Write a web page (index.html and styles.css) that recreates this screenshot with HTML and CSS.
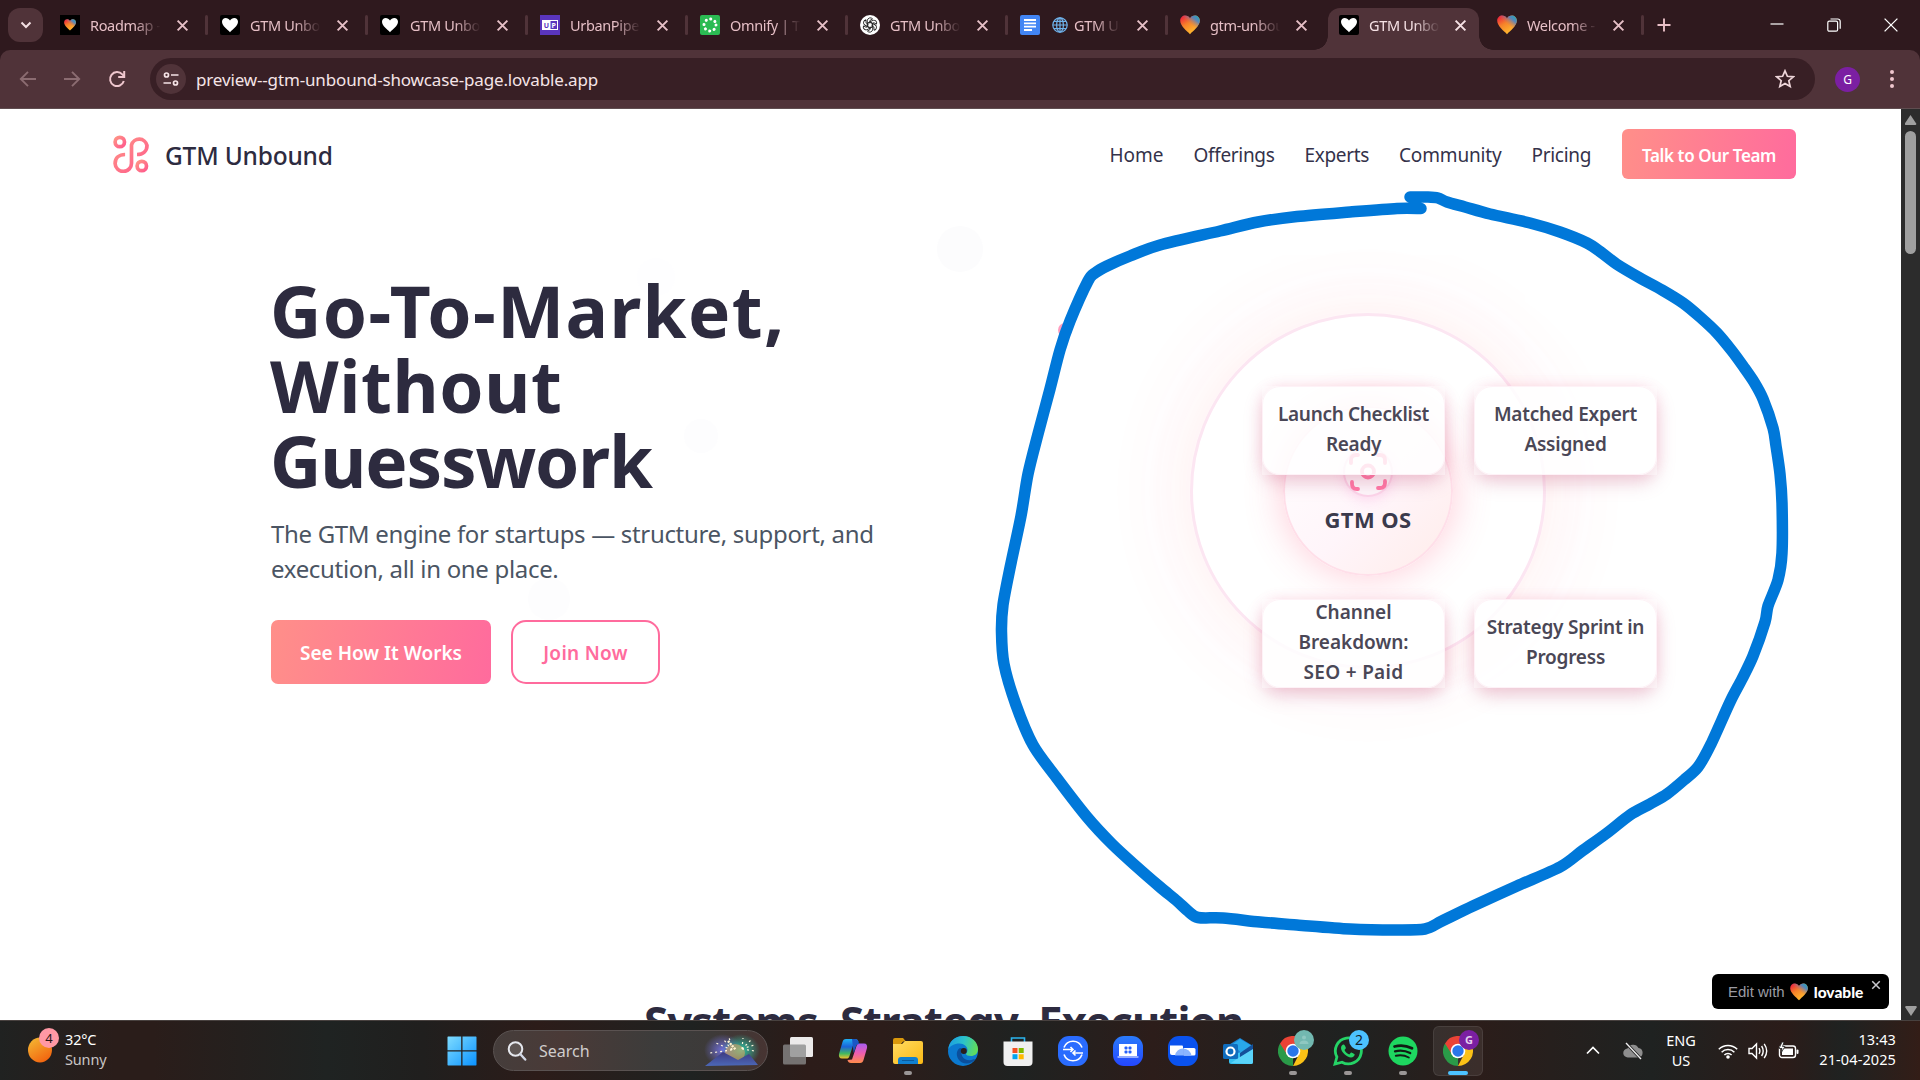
FILE: index.html
```html
<!DOCTYPE html>
<html lang="en">
<head>
<meta charset="utf-8">
<title>GTM Unbound</title>
<link rel="stylesheet" href="styles.css">
</head>
<body>
<svg class="defs" width="0" height="0" aria-hidden="true">
  <defs>
    <linearGradient id="gHeart" x1="0.1" y1="0.1" x2="0.6" y2="0.9"><stop offset="0" stop-color="#ee2b3c"/><stop offset="0.45" stop-color="#f5822a"/><stop offset="1" stop-color="#ffb52e"/></linearGradient>
    <linearGradient id="gHeartBlue" x1="0.95" y1="0.05" x2="0.55" y2="0.5"><stop offset="0" stop-color="#22a7b8"/><stop offset="0.4" stop-color="#4a86c8" stop-opacity="0.9"/><stop offset="1" stop-color="#c07a70" stop-opacity="0"/></linearGradient>
    <linearGradient id="gPink" x1="0" y1="0" x2="1" y2="1"><stop offset="0" stop-color="#ff9486"/><stop offset="1" stop-color="#ff5a8c"/></linearGradient>
    <linearGradient id="gSun" x1="0" y1="0" x2="0.6" y2="1"><stop offset="0" stop-color="#f4bd35"/><stop offset="1" stop-color="#f26610"/></linearGradient>
    <linearGradient id="gWin" x1="0" y1="0" x2="1" y2="1"><stop offset="0" stop-color="#7fdcff"/><stop offset="1" stop-color="#0a92ff"/></linearGradient>
    <linearGradient id="gEdge" x1="0" y1="0.3" x2="1" y2="0.5"><stop offset="0" stop-color="#1b9de2"/><stop offset="0.5" stop-color="#2cc3c9"/><stop offset="1" stop-color="#63dd57"/></linearGradient>
    <linearGradient id="gFolder" x1="0" y1="0" x2="1" y2="1"><stop offset="0" stop-color="#ffdb62"/><stop offset="1" stop-color="#fbb914"/></linearGradient>
    <linearGradient id="gBlue" x1="0" y1="0" x2="0" y2="1"><stop offset="0" stop-color="#2a7bfb"/><stop offset="1" stop-color="#2447ff"/></linearGradient>
    <linearGradient id="gCopA" x1="0" y1="0" x2="0" y2="1"><stop offset="0" stop-color="#1fb2f5"/><stop offset="0.4" stop-color="#1a63d8"/><stop offset="0.75" stop-color="#43b95f"/><stop offset="1" stop-color="#f2c12c"/></linearGradient>
    <linearGradient id="gCopB" x1="0" y1="0" x2="0" y2="1"><stop offset="0" stop-color="#a75cf0"/><stop offset="0.5" stop-color="#ee5db0"/><stop offset="1" stop-color="#ff8c4a"/></linearGradient>
    <radialGradient id="gGlowL"><stop offset="0" stop-color="#6f6fd8"/><stop offset="1" stop-color="#6f6fd8" stop-opacity="0"/></radialGradient>
    <radialGradient id="gGlowR"><stop offset="0" stop-color="#2fc5a8"/><stop offset="1" stop-color="#2fc5a8" stop-opacity="0"/></radialGradient>
    <linearGradient id="gHill" x1="0" y1="0" x2="0" y2="1"><stop offset="0" stop-color="#3d3a80"/><stop offset="1" stop-color="#4c68b8"/></linearGradient>
  </defs>
  <symbol id="heart" viewBox="0 0 20 20"><path d="M10 19.200C7 16 .2 11 .2 5.800.2 2.600 2.600.6 5.200.6c2 0 3.800 1 4.800 2.800C11 1.600 12.800.6 14.800.6c2.600 0 5 2 5 5.200C19.800 11 13 16 10 19.200z" fill="url(#gHeart)"/><path d="M10 19.200C7 16 .2 11 .2 5.800.2 2.600 2.600.6 5.200.6c2 0 3.800 1 4.800 2.800C11 1.600 12.800.6 14.800.6c2.600 0 5 2 5 5.200C19.800 11 13 16 10 19.200z" fill="url(#gHeartBlue)"/></symbol>
  <symbol id="whiteheart" viewBox="0 0 20 20"><rect width="20" height="20" rx="2" fill="#000"/><path d="M10 17.200C7.500 14.500 2 11 2 6.800 2 4.500 3.700 3 5.700 3 7.500 3 9 4 10 5.500 11 4 12.500 3 14.300 3 16.300 3 18 4.500 18 6.800 18 11 12.500 14.500 10 17.200z" fill="#fff"/></symbol>
  <symbol id="x" viewBox="0 0 12 12"><path d="M1.500 1.500l9 9m0-9l-9 9" stroke="currentColor" stroke-width="1.800" fill="none"/></symbol>
  <symbol id="chrome" viewBox="0 0 30 30"><path d="M15 15V30A15 15 0 0 1 2 7.500z" fill="#2a9a48"/><path d="M15 8.200H28.400A15 15 0 0 0 2 7.500L9 18.400z" fill="#ea4335"/><path d="M20.900 18.400L15 30A15 15 0 0 0 28.400 8.200H15z" fill="#fbc116"/><circle cx="15" cy="15" r="7.300" fill="#fff"/><circle cx="15" cy="15" r="5.700" fill="#2a76ea"/></symbol>
</svg>

<div class="screen">
  <header class="tabstrip">
    <button class="tabsearch" aria-label="Search tabs"><svg width="12" height="8" viewBox="0 0 12 8"><path d="M1.500 1.500L6 6l4.500-4.500" stroke="#f3dfe2" stroke-width="2" fill="none"/></svg></button>
    <div class="tab"><svg class="fav" viewBox="0 0 20 20"><rect width="20" height="20" fill="#000"/><use href="#heart" x="4" y="4" width="12" height="12"/></svg><span class="t">Roadmap - Lov</span><svg class="cl"><use href="#x"/></svg></div>
    <div class="tab"><svg class="fav"><use href="#whiteheart"/></svg><span class="t">GTM Unbound</span><svg class="cl"><use href="#x"/></svg></div>
    <div class="tab"><svg class="fav"><use href="#whiteheart"/></svg><span class="t">GTM Unbound</span><svg class="cl"><use href="#x"/></svg></div>
    <div class="tab"><svg class="fav" viewBox="0 0 20 20"><rect width="20" height="20" fill="#5a35bd"/><rect x="2" y="5" width="16" height="10" fill="#fff"/><rect x="10.500" y="6" width="6.500" height="8" fill="#5a35bd"/><text x="3.800" y="12.700" font-size="7" font-weight="700" fill="#5a35bd">U</text><text x="11.600" y="12.700" font-size="7" font-weight="700" fill="#fff">P</text></svg><span class="t">UrbanPiper</span><svg class="cl"><use href="#x"/></svg></div>
    <div class="tab"><svg class="fav" viewBox="0 0 20 20"><rect width="20" height="20" rx="2" fill="#2bbb53"/><circle cx="10" cy="10" r="6" fill="none" stroke="#fff" stroke-width="3" stroke-linecap="round" stroke-dasharray="0.100 4.612"/></svg><span class="t">Omnify | The</span><svg class="cl"><use href="#x"/></svg></div>
    <div class="tab"><svg class="fav" viewBox="0 0 20 20"><circle cx="10" cy="10" r="10" fill="#fff"/><g fill="none" stroke="#222" stroke-width=".9"><g id="petal"><path d="M7.300 8.500V5.800a3 3 0 0 1 5.300-1.900M7.300 8.500v3l2.700 1.600M12.600 3.900L9.900 5.500v3"/></g><use href="#petal" transform="rotate(60 10 10)"/><use href="#petal" transform="rotate(120 10 10)"/><use href="#petal" transform="rotate(180 10 10)"/><use href="#petal" transform="rotate(240 10 10)"/><use href="#petal" transform="rotate(300 10 10)"/></g></svg><span class="t">GTM Unbound</span><svg class="cl"><use href="#x"/></svg></div>
    <div class="tab"><svg class="fav" viewBox="0 0 20 20"><rect width="20" height="20" rx="2" fill="#4285f4"/><path d="M4 5h12M4 8.300h12M4 11.600h12M4 15h8" stroke="#fff" stroke-width="1.800"/></svg><span class="t"><svg class="globe" viewBox="0 0 16 16"><g fill="none" stroke="#6fb3ec" stroke-width="1.200"><circle cx="8" cy="8" r="7.200"/><ellipse cx="8" cy="8" rx="3.400" ry="7.200"/><path d="M8 .8v14.400M.8 8h14.400M2 4.300h12M2 11.700h12"/></g></svg>GTM Unb</span><svg class="cl"><use href="#x"/></svg></div>
    <div class="tab nosep"><svg class="fav"><use href="#heart"/></svg><span class="t">gtm-unbound</span><svg class="cl"><use href="#x"/></svg></div>
    <div class="tab active"><svg class="fav"><use href="#whiteheart"/></svg><span class="t">GTM Unbound</span><svg class="cl"><use href="#x"/></svg></div>
    <div class="tab last"><svg class="fav"><use href="#heart"/></svg><span class="t">Welcome - L</span><svg class="cl"><use href="#x"/></svg></div>
    <svg class="plus" width="14" height="14" viewBox="0 0 14 14"><path d="M7 .5v13M.5 7h13" stroke="#e9bfc7" stroke-width="1.900"/></svg>
    <div class="wincontrols">
      <svg width="14" height="14" viewBox="0 0 14 14"><path d="M.5 6h13" stroke="#fff" stroke-width="1.200"/></svg>
      <svg width="14" height="14" viewBox="0 0 14 14"><g fill="none" stroke="#fff" stroke-width="1.200"><rect x=".8" y="3.200" width="9.800" height="10" rx="1.500"/><path d="M3.500 1h7.300a2.400 2.400 0 0 1 2.400 2.400v7.400"/></g></svg>
      <svg width="14" height="14" viewBox="0 0 14 14"><path d="M.6.6l12.800 12.800m0-12.800L.6 13.400" stroke="#fff" stroke-width="1.300"/></svg>
    </div>
  </header>

  <div class="toolbar">
    <svg width="18" height="18" viewBox="0 0 18 18"><path d="M17 9H2M9 1.800L1.800 9 9 16.200" fill="none" stroke="#8b6c71" stroke-width="1.900"/></svg>
    <svg class="fwd" width="18" height="18" viewBox="0 0 18 18"><path d="M1 9h15M9 1.800L16.200 9 9 16.200" fill="none" stroke="#8b6c71" stroke-width="1.900"/></svg>
    <svg class="rel" width="18" height="18" viewBox="0 0 18 18"><path d="M15.800 11A7 7 0 1 1 14.300 4.400L16 6" fill="none" stroke="#efc7ce" stroke-width="2"/><path d="M16.200 1v6h-6" fill="none" stroke="#efc7ce" stroke-width="2"/></svg>
    <div class="omnibox">
      <span class="site"><svg width="16" height="16" viewBox="0 0 16 16"><g fill="none" stroke="#f5e3e6" stroke-width="1.700"><circle cx="3.500" cy="4" r="2"/><path d="M8 4h7.500M.5 12H8"/><circle cx="12.500" cy="12" r="2"/></g></svg></span>
      <span class="url">preview--gtm-unbound-showcase-page.lovable.app</span>
      <svg class="star" width="20" height="20" viewBox="0 0 20 20"><path d="M10 1.800l2.400 5.500 5.900.5-4.500 3.900 1.400 5.900L10 14.500l-5.200 3.100 1.400-5.900L1.700 7.800l5.900-.5z" fill="none" stroke="#eed5d9" stroke-width="1.700"/></svg>
    </div>
    <span class="avatar">G</span>
    <svg class="dots" width="6" height="20" viewBox="0 0 6 20"><g fill="#efc7ce"><circle cx="3" cy="3" r="2"/><circle cx="3" cy="10" r="2"/><circle cx="3" cy="17" r="2"/></g></svg>
  </div>

  <div class="viewport">
    <main class="page">
      <nav class="nav">
        <svg class="logo" width="36" height="38" viewBox="0 0 36 38"><g fill="none" stroke="url(#gPink)" stroke-width="3.700"><circle cx="6.800" cy="7" r="4.700"/><circle cx="28.800" cy="31" r="4.700"/><path d="M24 19.500c6 0 10-3.500 10-9a8 8 0 0 0-15.500-.500V28a8.200 8.200 0 0 1-16.400.500c0-5.500 4-9 10-9"/></g></svg>
        <span class="brand">GTM Unbound</span>
        <div class="links"><a>Home</a><a class="tight">Offerings</a><a class="tight">Experts</a><a class="l4">Community</a><a class="tight">Pricing</a></div>
        <a class="cta">Talk to Our Team</a>
      </nav>
      <section class="hero">
        <div class="ghosts"><i class="ghost g1"></i><i class="ghost g2"></i><i class="ghost g3"></i><i class="ghost g4"></i></div>
        <div class="copy">
          <h1><span class="h-a">Go-To-Market,</span><br><span class="h-b">Without</span><br><span class="h-c">Guesswork</span></h1>
          <p>The GTM engine for startups — structure, support, and<br>execution, all in one place.</p>
          <div class="actions"><a class="primary">See How It Works</a><a class="outline">Join Now</a></div>
        </div>
        <div class="diagram">
          <div class="ring"></div>
          <div class="core"><span class="coreicon"><svg width="40" height="40" viewBox="0 0 40 40"><g fill="none" stroke="#ff78a6" stroke-width="3.800" stroke-linecap="round" stroke-linejoin="round"><path d="M3 11V8q0-5 5-5h2M30 3h2q5 0 5 5v3M37 29v2q0 5-5 5h-2M10 37H9q-5 0-5-5v-2"/><circle cx="20" cy="19.500" r="6"/></g></svg></span><strong>GTM OS</strong></div>
          <div class="cards">
            <div class="card c1"><span>Launch Checklist<br>Ready</span></div>
            <div class="card c2"><span>Matched Expert<br>Assigned</span></div>
            <div class="card"><span>Channel<br>Breakdown:<br><span class="c3">SEO + Paid</span></span></div>
            <div class="card c2"><span>Strategy Sprint in<br>Progress</span></div>
          </div>
        </div>
      </section>
      <h2>Systems. Strategy. Execution.</h2>
      <div class="badge"><span class="edit">Edit with</span><svg width="18" height="18"><use href="#heart"/></svg><b>lovable</b><svg class="bx" width="10" height="10"><use href="#x"/></svg></div>
    </main>
    <div class="scrollbar"><i class="up"></i><i class="thumb"></i><i class="down"></i></div>
  </div>

  <footer class="taskbar">
    <div class="weather"><span class="sun"><svg width="24" height="26"><ellipse cx="12" cy="13" rx="12" ry="12.500" fill="url(#gSun)"/></svg><em>4</em></span><span class="wt"><span>32°C</span><span class="dim">Sunny</span></span></div>
    <svg class="start" width="30" height="30" viewBox="0 0 30 30"><path d="M1 .5h13.200v13.700H.5V1zM15.500.500H29l.500.500v13.200H15.500zM.500 15.500h13.700v14H1l-.500-.500zM15.500 15.500h14V29l-.500.500H15.500z" fill="url(#gWin)"/></svg>
    <div class="search"><svg width="20" height="20" viewBox="0 0 20 20"><circle cx="8.500" cy="8" r="6.800" fill="#ffffff22" stroke="#e6e8ee" stroke-width="2"/><path d="M13.200 13l5 5.500" stroke="#d3d8e6" stroke-width="2.400" stroke-linecap="round"/></svg><span>Search</span>
      <svg class="fire" width="56" height="34" viewBox="0 0 56 34"><ellipse cx="19" cy="16" rx="19" ry="16" fill="url(#gGlowL)"/><ellipse cx="37" cy="16" rx="19" ry="16" fill="url(#gGlowR)"/><ellipse cx="31" cy="19" rx="10" ry="9" fill="#e8a45c" opacity=".55"/><g stroke="#fff6dc" stroke-width="1.200" stroke-dasharray="2 3"><path d="M28 16L20 6M28 16L25 3M28 16L12 9M28 16L6 19M38 15L47 6M38 15L50 11M38 15L51 17M38 15L39 4"/></g><path d="M24 7l8 9" stroke="#fff0cc" stroke-width="2.500" stroke-dasharray="2 1"/><path d="M1 32L19 18l15 8 11-6 9 11z" fill="url(#gHill)"/></svg>
    </div>
    <div class="apps">
      <span class="app"><svg viewBox="0 0 30 30"><rect x="7" y="1" width="23" height="20" rx="1.500" fill="#eceaea"/><rect x="0" y="8.500" width="23" height="20" rx="1.500" fill="#8a8a8a" opacity=".78"/></svg></span>
      <span class="app"><svg viewBox="0 0 30 30"><path d="M8 3h9c2 0 3 1 3.500 3L16 6.500 11.500 20c-.6 2-1.500 2.500-3 2.500H4c-2.500 0-3.500-2-3-4.500L4.500 6C5 4 6 3 8 3z" fill="url(#gCopA)"/><path d="M22 27h-9c-2 0-3-1-3.500-3l4.500-.5L18.500 10c.6-2 1.500-2.500 3-2.500H26c2.500 0 3.500 2 3 4.500L25.500 24c-.5 2-1.500 3-3.500 3z" fill="url(#gCopB)"/><path d="M14 3h3c2 0 3 1 3.500 3l.7 2c-2 0-3 1-3.500 3l-2 6z" fill="#1a56c4"/></svg></span>
      <span class="app"><svg viewBox="0 0 30 30"><path d="M0 4q0-2 2-2h8l3 3.500h-3L8 8H0z" fill="#d9980c"/><path d="M0 8h9l3-3h16q2 0 2 2v19q0 2-2 2H2q-2 0-2-2z" fill="url(#gFolder)"/><path d="M5 28v-4q0-3 3-3h14q3 0 3 3v4z" fill="#1080d0"/><path d="M9 24.500h12" stroke="#0a5a9c" stroke-width="1"/></svg><i class="run"></i></span>
      <span class="app"><svg viewBox="0 0 30 30"><circle cx="15" cy="15" r="15" fill="#0b79cf"/><path d="M.3 13C1.200 5 7.500 0 15 0c9 0 15 6.500 15 13 0 5-3.500 7-7 7-3 0-5-1-5-2 0-.8 1.500-1.500 1.500-4 0-3.500-3.500-6.500-8-6.500C6 7.500 2 10 .3 13z" fill="url(#gEdge)"/><path d="M12 12c-5 3-4 11 2 14.500 5 2 10 .5 12.500-2.500.5-.8 0-1.200-.8-.8-4 2-9.500 1-11.500-3-1.400-3-.9-6 .8-7.500z" fill="#0b4f9c"/><circle cx="15.800" cy="15" r="3" fill="#2a1d1b"/></svg></span>
      <span class="app"><svg viewBox="0 0 30 30"><path d="M8.500 6.500V2h13v4.500" fill="none" stroke="#2bb5ee" stroke-width="1.600"/><path d="M.5 5.500h29V26q0 4-4 4h-21q-4 0-4-4z" fill="#f0f0f0"/><path d="M9.500 12h5v5h-5z" fill="#f25022"/><path d="M15.700 12h5v5h-5z" fill="#7fba00"/><path d="M9.500 18.200h5v5h-5z" fill="#00a4ef"/><path d="M15.700 18.200h5v5h-5z" fill="#ffb900"/></svg></span>
      <span class="app"><svg viewBox="0 0 30 30"><rect width="30" height="30" rx="11" fill="#2a6cff"/><g fill="none" stroke="#fff" stroke-width="1.600"><path d="M6 11.500A9.600 9.600 0 0 1 24 11.500M24 18.500A9.600 9.600 0 0 1 6 18.500"/><path d="M5 13.500h10m-2.500-2.500l2.500 2.500-2.500 2.500M25 17H15m2.500-2.500L15 17l2.500 2.500"/></g></svg></span>
      <span class="app"><svg viewBox="0 0 30 30"><rect width="30" height="30" rx="11" fill="url(#gBlue)"/><path d="M6 8h18v12H6zM4.500 20.500h21V21q0 .5-.5.500H5q-.5 0-.5-.5z" fill="#fff"/><g fill="#2460fb"><rect x="11.500" y="10.500" width="3" height="3" rx="1"/><rect x="15.500" y="10.500" width="3" height="3" rx="1"/><rect x="11.500" y="14.500" width="3" height="3" rx="1"/><rect x="15.500" y="14.500" width="3" height="3" rx="1"/></g></svg></span>
      <span class="app"><svg viewBox="0 0 30 30"><rect width="30" height="30" rx="11" fill="#0a52ee"/><path d="M2 9.500h12q1 0 1 1V19H4q-2 0-2-2z" fill="#fff"/><path d="M15.500 12H26q1.500 0 1.500 1.500V18q0 1.500-1.500 1.500H15.500z" fill="#fff"/><path d="M7 19.500a8 8 0 0 1 8-7v7zM15.500 12.500a9 9 0 0 1 8 7h-8z" fill="#8ab4ff"/></svg></span>
      <span class="app"><svg viewBox="0 0 30 30"><path d="M4 10L17 2l13 8v5L17 22 4 15z" fill="#1a7fcf"/><path d="M10 8l7-5 12 7-10 8z" fill="#29a8ea"/><path d="M30 12v14q0 2-2 2H8q-2 0-2-2V20z" fill="#35c1f1"/><path d="M30 12L8 27l20 1q2 0 2-2z" fill="#5ad4fa"/><path d="M17 17L30 8v5L17 21z" fill="#14509a"/><rect y="8" width="15" height="15" rx="1.500" fill="#0f6cbd"/><circle cx="7.500" cy="15.500" r="4" fill="none" stroke="#fff" stroke-width="2.200"/></svg></span>
      <span class="app"><svg viewBox="0 0 30 30"><use href="#chrome" width="30" height="30"/></svg><em class="bd teal"><svg width="12" height="12" viewBox="0 0 12 12"><circle cx="6" cy="3.500" r="2" fill="#8fc8c1"/><path d="M1.500 10q0-3.500 4.500-3.500t4.500 3.500z" fill="#8fc8c1"/></svg></em><i class="run"></i></span>
      <span class="app"><svg viewBox="0 0 30 30"><path d="M2 28l1.900-7A13 13 0 1 1 9 26.200z" fill="none" stroke="#25d366" stroke-width="2.800"/><path d="M10.500 8.500c-1 0-2.500 1.500-2.500 3.500 0 4 6 9.500 10 9.500 2 0 3.700-1.500 3.700-3 0-.5-3-2-3.700-2l-1.700 2c-2-.7-4-2.500-4.800-4.500l1.400-1.800c0-.9-1.200-3.700-2.400-3.700z" fill="#25d366"/></svg><em class="bd cyan">2</em><i class="run"></i></span>
      <span class="app"><svg viewBox="0 0 30 30"><circle cx="15" cy="15" r="14.500" fill="#1ed760"/><g fill="none" stroke="#111c14" stroke-linecap="round"><path d="M6.500 10.500q9-2.500 17.500 1.800" stroke-width="2.700"/><path d="M7 15.300q8-2 15.200 1.800" stroke-width="2.300"/><path d="M7.800 19.800q7-1.600 13 1.700" stroke-width="1.900"/></g></svg><i class="run"></i></span>
      <span class="app on"><svg viewBox="0 0 30 30"><use href="#chrome" width="30" height="30"/></svg><em class="bd purple">G</em><i class="run wide"></i></span>
    </div>
    <div class="tray">
      <svg class="chev" width="14" height="9" viewBox="0 0 14 9"><path d="M1 7.500l6-6 6 6" fill="none" stroke="#fff" stroke-width="1.700"/></svg>
      <svg class="cloud" width="20" height="18" viewBox="0 0 20 18"><path d="M5 15.500a4.500 4.500 0 0 1-.5-9A6 6 0 0 1 15.500 6a4.800 4.800 0 0 1 0 9.500z" fill="#8e8e8e"/><path d="M3 1l15 16" stroke="#222" stroke-width="3"/><path d="M3 1l15 16" stroke="#f0f0f0" stroke-width="1.300"/></svg>
      <span class="lang"><span>ENG</span><span>US</span></span>
      <svg class="wifi" width="20" height="16" viewBox="0 0 20 16"><g fill="none" stroke="#fff" stroke-width="1.500"><path d="M.8 6.200a13 13 0 0 1 18.400 0M3.600 9.200a9 9 0 0 1 12.800 0M6.400 12a5 5 0 0 1 7.200 0"/></g><circle cx="10" cy="14" r="1.800" fill="#fff"/></svg>
      <svg class="snd" width="20" height="18" viewBox="0 0 20 18"><g fill="none" stroke="#fff" stroke-width="1.400"><path d="M1 6.500h3L8.500 2v14L4 11.500H1z"/><path d="M11 6.200q1.800 2.800 0 5.600M13.600 4q3.200 5 0 10M16.200 1.800q5 7.200 0 14.400"/></g></svg>
      <svg class="bat" width="21" height="17" viewBox="0 0 21 17"><rect x="1.500" y="4" width="16" height="11.500" rx="2.500" fill="none" stroke="#fff" stroke-width="1.400"/><rect x="4" y="6.500" width="11" height="6.500" fill="#fff"/><rect x="18.500" y="7.500" width="2" height="4.500" rx="1" fill="#fff"/><path d="M4 0L1 6.500h3L3 11l4-6.500H4.500L6 0z" fill="#fff" stroke="#222" stroke-width=".8"/></svg>
      <span class="clock"><span>13:43</span><span>21-04-2025</span></span>
    </div>
  </footer>

  <svg class="ink" width="810" height="760" viewBox="990 185 810 760"><circle cx="1065" cy="330" r="7" fill="#ff9dbe"/><path id="stroke" fill="none" stroke="#0078d9" stroke-width="11.500" stroke-linecap="round" stroke-linejoin="round"/></svg>
</div>
<script src="ink.js"></script>
</body>
</html>
```
FILE: ink.js
```js
// Hand-drawn marker stroke: a smooth curve through the sampled pen positions.
const pen = [
  [1421,208.500],[1397,208.500],[1350,212],[1297,216.500],[1258,222],[1220,231],[1160,245],[1130,256],[1107,266],[1095,273],[1088,281],
  [1070,321],[1060,350],[1050,389],[1038,434],[1028,474],[1021,516],[1010,568],[1003,605],[1001.500,632],[1004,664],
  [1016,705],[1033,745],[1056,777],[1087,817],[1112,844],[1137,867],[1160,887],[1177,901],[1188,911],[1198,917.500],
  [1223,918],[1260,922],[1297,925],[1350,929],[1395,930],[1425,929],[1442,921],[1473,906],[1517,886],[1560,867],[1582,851],
  [1607,833],[1630,815],[1650,804],[1667,794],[1684,780],[1698,767],[1711,744],[1730,702],[1742,679],[1753,656],[1765,622],
  [1768,606],[1778,580],[1782,553],[1782,503],[1780,474],[1776,446],[1773,428],[1763,399],[1754,382],[1743,366],[1732,351],
  [1717,333],[1700,317],[1683,303],[1662,290],[1640,278],[1618,265],[1602,253],[1587,243],[1560,232],[1530,223],
  [1490,214],[1465,207],[1447,202],[1438,198],[1428,197],[1410,197]
];
let d = `M${pen[0]}`;
for (let i = 0; i < pen.length - 1; i++) {
  const a = pen[i - 1] || pen[i], b = pen[i], c = pen[i + 1], e = pen[i + 2] || c;
  d += `C${b[0] + (c[0] - a[0]) / 7} ${b[1] + (c[1] - a[1]) / 7} ${c[0] - (e[0] - b[0]) / 7} ${c[1] - (e[1] - b[1]) / 7} ${c[0]} ${c[1]}`;
}
document.getElementById("stroke").setAttribute("d", d);
```
FILE: styles.css
```css
* { box-sizing: border-box; }
body { margin: 0; background: #fff; font-family: "Noto Sans", "Open Sans", sans-serif; overflow: hidden; }
.defs { position: absolute; }
.screen { position: relative; width: 1920px; height: 1080px; display: grid; grid-template-rows: 50px 59px 911px 60px; overflow: hidden; background: #2f191e; }
i, em { font-style: normal; }

/* tab strip */
.tabstrip { background: #2f191e; display: flex; align-items: center; padding-left: 8px; }
.tabsearch { width: 35px; height: 34px; margin-right: 5px; border: 0; border-radius: 12px; background: #503339; display: flex; align-items: center; justify-content: center; padding: 0; }
.tab { position: relative; width: 160px; height: 42px; margin-top: 8px; padding: 0 0 8px 12px; display: flex; align-items: center; color: #e6bfc6; flex: none; }
.tab::after { content: ""; width: 3px; height: 20px; background: #503339; border-radius: 2px; margin-left: 16px; }
.fav { width: 20px; height: 20px; flex: none; }
.t { width: 72px; margin: 0 14px 0 10px; font-size: 14.500px; letter-spacing: -0.350px; white-space: nowrap; overflow: hidden; -webkit-mask-image: linear-gradient(90deg, #000 62%, transparent 98%); mask-image: linear-gradient(90deg, #000 62%, transparent 98%); flex: none; }
.globe { width: 16px; height: 16px; vertical-align: -2px; margin-right: 6px; margin-left: 2px; }
.cl { width: 13px; height: 13px; flex: none; }
.nosep::after, .active::after { display: none; }
.nosep .t, .active .t, .last .t { margin-right: 13px; }
.active { width: 151px; margin-right: 7px; padding-left: 11px; background: #503339; border-radius: 12px 12px 0 0; color: #f6e2e5; }
.active::before { content: ""; position: absolute; left: -14px; right: -14px; bottom: 0; height: 14px; background: radial-gradient(circle at 0 0, transparent 13.500px, #503339 14px) left / 14px 14px no-repeat, radial-gradient(circle at 100% 0, transparent 13.500px, #503339 14px) right / 14px 14px no-repeat; }
.last { width: 159px; padding-left: 11px; }
.plus { margin-left: 12px; }
.wincontrols { margin-left: auto; display: flex; gap: 43px; padding-right: 22px; }

/* toolbar */
.toolbar { background: #503339; border-bottom: 1px solid #5f4d50; border-radius: 10px 10px 0 0; display: flex; align-items: center; padding: 0 25px 0 19px; }
.fwd { margin-left: 26px; }
.rel { margin-left: 27px; }
.omnibox { width: 1665px; height: 42px; margin-left: 24px; border-radius: 21px; background: #381f25; display: flex; align-items: center; padding: 0 20px 0 6px; }
.site { width: 30px; height: 30px; border-radius: 50%; background: #503339; display: flex; align-items: center; justify-content: center; }
.url { margin-left: 10px; font-size: 17px; letter-spacing: -0.150px; color: #f5e4e7; }
.star { margin-left: auto; }
.avatar { width: 25px; height: 25px; margin-left: 20px; border-radius: 50%; background: #7b1fa2; color: #fff; font-size: 12px; line-height: 25px; text-align: center; }
.dots { margin-left: auto; }

/* page */
.viewport { display: grid; grid-template-columns: 1fr 19px; overflow: hidden; background: #fff; }
.page { position: relative; height: 911px; overflow: hidden; color: #2d2b3f; }
.nav { height: 90px; display: flex; align-items: center; padding: 0 105px 0 113px; }
.brand { margin: 2px 0 0 16px; font-size: 24.500px; font-weight: 500; letter-spacing: -0.200px; }
.links { margin: 1px 0 0 auto; display: flex; gap: 30px; font-size: 19px; color: #34324a; }
.tight { letter-spacing: -0.330px; }
.l4 { letter-spacing: -0.150px; }
.cta { width: 174px; height: 50px; margin-left: 31px; padding-top: 2px; border-radius: 6px; display: flex; align-items: center; justify-content: center; color: #fff; font-weight: 600; font-size: 17px; letter-spacing: -0.380px; background: linear-gradient(100deg, #ff8f89, #ff6b9d); }
.hero { position: relative; z-index: 0; display: grid; grid-template-columns: 919px 1fr; padding-left: 271px; height: 660px; }
.copy { padding-top: 74px; }
h1 { margin: 0 0 0 -1px; font-size: 71px; line-height: 75px; font-weight: 700; white-space: nowrap; }
.h-a { letter-spacing: 1.400px; }
.h-b { letter-spacing: 0.600px; }
.h-c { letter-spacing: -1.150px; }
.copy p { margin: 18px 0 0; font-size: 24px; line-height: 35px; letter-spacing: -0.320px; color: #4b5563; white-space: nowrap; }
.actions { display: flex; gap: 20px; margin-top: 34px; font-size: 19px; font-weight: 600; }
.primary, .outline { height: 64px; padding-top: 2px; display: flex; align-items: center; justify-content: center; border-radius: 7px; }
.primary { width: 220px; color: #fff; background: linear-gradient(100deg, #ff8f89, #ff6b9d); }
.outline { width: 149px; color: #ff6b9d; border: 2px solid #ff6b9d; border-radius: 15px; letter-spacing: 0.300px; }
.ghosts { position: absolute; inset: 27px 0 0 240px; z-index: -1; }
.ghost { position: absolute; width: 46px; height: 46px; border-radius: 50%; background: #fcfcfd; }
.g1 { left: 697px; top: 0; }
.g2 { left: 397px; top: 32px; width: 38px; height: 38px; background: #fefeff; }
.g3 { left: 444px; top: 193px; width: 34px; height: 34px; background: #fdfdfe; }
.g4 { left: 288px; top: 352px; width: 42px; height: 42px; background: #fdfdfe; }

/* product diagram */
.diagram { position: relative; }
.ring { position: absolute; left: 0; top: 114px; width: 356px; height: 356px; border: 3px solid #fce6f2; border-radius: 50%; background: #fff; box-shadow: 0 0 75px rgba(255, 107, 107, .1), 0 0 150px rgba(255, 107, 157, .03); }
.core { position: absolute; left: 93px; top: 207px; width: 170px; height: 170px; border: 2px solid #ffdfe9; border-radius: 50%; background: linear-gradient(135deg, #fff, #fff5fa 55%, #ffece9); box-shadow: 0 0 38px rgba(255, 80, 120, .3); display: flex; flex-direction: column; align-items: center; color: #3b3a4c; }
.coreicon { width: 50px; height: 50px; margin-top: 39px; border-radius: 50%; background: #fdf7fb; border: 2px solid #fbd5ea; display: flex; align-items: center; justify-content: center; box-shadow: 0 4px 12px rgba(240, 90, 190, .15); }
.core strong { font-size: 22px; line-height: 30px; margin-top: 7px; letter-spacing: 0.400px; white-space: nowrap; }
.cards { position: absolute; left: 72px; top: 187px; display: grid; grid-template-columns: 183px 183px; grid-template-rows: 89px 89px; gap: 124px 29px; }
.card { position: relative; z-index: 0; border-radius: 18px; border: 1px solid #fdeaf2; background: rgba(255, 255, 255, .72); box-shadow: 0 8px 18px rgba(190, 90, 125, .28), 0 0 14px rgba(255, 107, 157, .16); padding-bottom: 3px; display: flex; align-items: center; justify-content: center; text-align: center; font-size: 19px; line-height: 30px; font-weight: 600; color: #4a4756; white-space: nowrap; }
.card::before { content: ""; position: absolute; inset: -1px; z-index: -1; background: rgba(255, 255, 255, .4); }
.c1 { letter-spacing: -0.330px; }
.c2 { letter-spacing: -0.220px; }
.c3 { letter-spacing: 0.300px; }

h2 { margin: 0; padding: 137px 0 0 644px; font-size: 43.500px; line-height: 50px; letter-spacing: -0.820px; white-space: nowrap; }
.badge { position: absolute; left: 1712px; top: 865px; width: 177px; height: 35px; border-radius: 6px; background: #000; color: #fff; display: flex; align-items: center; padding-left: 16px; }
.edit { font: 15px "Liberation Sans", sans-serif; color: #9b9ba3; margin-right: 5px; }
.badge b { font: 900 15.500px Lato, sans-serif; margin-left: 6px; }
.bx { color: #c9c9cf; margin: -14px 0 0 8px; }
.scrollbar { background: #2c2c2c; display: flex; flex-direction: column; align-items: center; padding: 6px 4px 4px; }
.up, .down { width: 12px; height: 10px; background: #9f9f9f; clip-path: polygon(50% 0, 100% 90%, 92% 100%, 8% 100%, 0 90%); }
.down { margin-top: auto; transform: rotate(180deg); }
.thumb { width: 11px; height: 123px; border-radius: 6px; background: #9f9f9f; margin-top: 6px; }

/* taskbar */
.taskbar { position: relative; border-top: 1px solid #48413f; background: linear-gradient(90deg, #202221 0, #2a1d1a 6%, #2a1d1a 8%, #1f2322 17%, #201f1e 22%, #2c1c19 28%, #1f2221 36%, #2c1c19 42%, #2c1d1a 46%, #1f2221 53%, #2c1d1a 60%, #1f2221 70%, #2b1d1a 77%, #1f2221 86%, #2b1c19 93%, #1f2221 96%, #331d17 100%); color: #fff; display: flex; align-items: center; font-size: 14.500px; }
.weather { width: 447px; display: flex; padding-left: 28px; flex: none; }
.sun { position: relative; width: 24px; height: 40px; padding-top: 6px; }
.sun em { position: absolute; left: 11px; top: -3px; width: 20px; height: 20px; border-radius: 50%; background: #ff98a4; color: #2a1414; font-size: 13px; line-height: 20px; text-align: center; }
.wt { margin: -2px 0 0 13px; display: flex; flex-direction: column; line-height: 20px; letter-spacing: -0.150px; }
.dim { color: #c9c6c5; }
.search { width: 275px; height: 41px; margin-left: 16px; border: 1px solid #5a5251; border-radius: 21px; background: linear-gradient(90deg, #453d3b, #4a3a37 25%, #3c3c3b 60%, #3d3a39 80%, #473432); display: flex; align-items: center; padding: 0 7px 0 13px; flex: none; }
.search span { margin-left: 12px; font-size: 16px; color: #d0cdcc; }
.fire { margin-left: auto; }
.start { flex: none; }
.apps { display: flex; gap: 5px; margin-left: 5px; }
.app { position: relative; width: 50px; height: 50px; border-radius: 6px; display: flex; align-items: center; justify-content: center; }
.app > svg { width: 30px; height: 30px; }
.on { background: rgba(255, 255, 255, .08); border: 1px solid rgba(255, 255, 255, .08); }
.run { position: absolute; bottom: 1px; width: 8px; height: 4px; border-radius: 2px; background: #9a9696; }
.wide { width: 20px; background: #4cc2ff; bottom: 0; }
.bd { position: absolute; right: 4px; top: 4px; width: 20px; height: 20px; border-radius: 50%; display: flex; align-items: center; justify-content: center; font-size: 14px; }
.on .bd { right: 3px; top: 3px; }
.teal { background: #72b8b0; }
.cyan { background: #4cc2ff; color: #12212b; }
.purple { background: #7b1fa2; color: #e4cfee; font-size: 11px; font-weight: 700; }
.tray { flex: 1; display: flex; align-items: center; padding: 0 24px 0 103px; }
.cloud { margin-left: 23px; }
.lang { margin: -2px 0 0 23px; display: flex; flex-direction: column; align-items: center; line-height: 20px; width: 30px; }
.wifi { margin-left: 22px; }
.snd { margin-left: 10px; }
.bat { margin-left: 10px; }
.clock { margin: -3px 0 0 auto; display: flex; flex-direction: column; align-items: flex-end; line-height: 20px; letter-spacing: 0.100px; }

.ink { position: absolute; left: 990px; top: 185px; pointer-events: none; z-index: 5; }
```
